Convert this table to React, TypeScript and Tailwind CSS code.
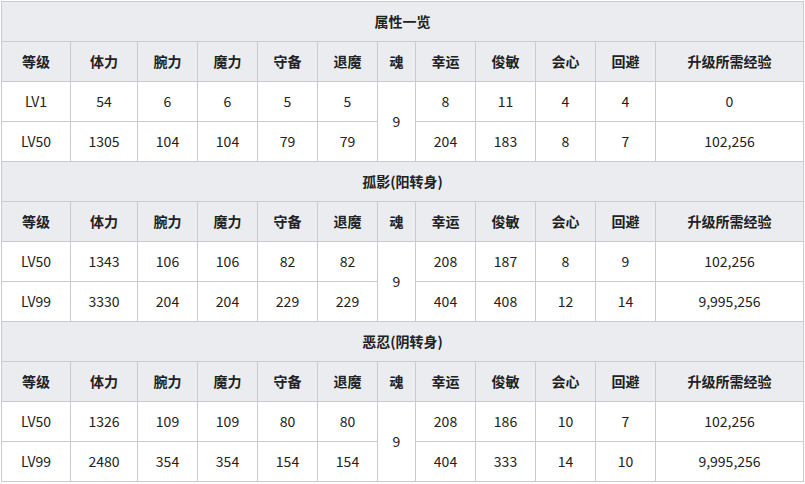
import React from 'react';

type Section = {
  title: string;
  soul: string;
  rows: string[][];
};

const headers = ['等级', '体力', '腕力', '魔力', '守备', '退魔', '魂', '幸运', '俊敏', '会心', '回避', '升级所需经验'];
const widths = ['w-[69px]', 'w-[67px]', 'w-[60px]', 'w-[60px]', 'w-[60px]', 'w-[60px]', 'w-[38px]', 'w-[60px]', 'w-[60px]', 'w-[60px]', 'w-[60px]', 'w-[148px]'];

const sections: Section[] = [
  {
    title: '属性一览',
    soul: '9',
    rows: [
      ['LV1', '54', '6', '6', '5', '5', '8', '11', '4', '4', '0'],
      ['LV50', '1305', '104', '104', '79', '79', '204', '183', '8', '7', '102,256'],
    ],
  },
  {
    title: '孤影(阳转身)',
    soul: '9',
    rows: [
      ['LV50', '1343', '106', '106', '82', '82', '208', '187', '8', '9', '102,256'],
      ['LV99', '3330', '204', '204', '229', '229', '404', '408', '12', '14', '9,995,256'],
    ],
  },
  {
    title: '恶忍(阴转身)',
    soul: '9',
    rows: [
      ['LV50', '1326', '109', '109', '80', '80', '208', '186', '10', '7', '102,256'],
      ['LV99', '2480', '354', '354', '154', '154', '404', '333', '14', '10', '9,995,256'],
    ],
  },
];

const cell = 'border border-[#c8ccd1] h-[40px] p-0 text-center align-middle';

export default function App() {
  return (
    <div className="p-px bg-white font-['Noto_Sans_CJK_SC','Noto_Sans',sans-serif] text-[14px] text-[#202122]">
      <table className="border-collapse w-[803px] table-fixed">
        <colgroup>
          {widths.map((w, i) => (
            <col key={i} className={w} />
          ))}
        </colgroup>
        <tbody>
          {sections.map((s) => (
            <React.Fragment key={s.title}>
              <tr>
                <th colSpan={12} className={`${cell} bg-[#eaecf0] font-bold`}>
                  {s.title}
                </th>
              </tr>
              <tr>
                {headers.map((h) => (
                  <th key={h} className={`${cell} bg-[#eaecf0] font-bold`}>
                    {h}
                  </th>
                ))}
              </tr>
              {s.rows.map((r, ri) => (
                <tr key={ri}>
                  {r.slice(0, 6).map((v, i) => (
                    <td key={i} className={cell}>{v}</td>
                  ))}
                  {ri === 0 && (
                    <td rowSpan={2} className={cell}>{s.soul}</td>
                  )}
                  {r.slice(6).map((v, i) => (
                    <td key={i + 6} className={cell}>{v}</td>
                  ))}
                </tr>
              ))}
            </React.Fragment>
          ))}
        </tbody>
      </table>
    </div>
  );
}
